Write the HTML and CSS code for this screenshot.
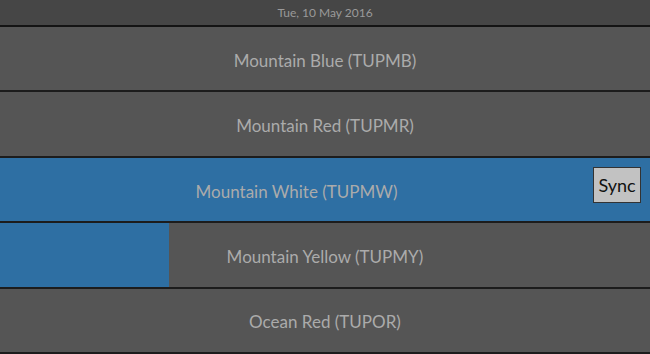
FILE: index.html
```html
<!DOCTYPE html>
<html>
<head>
<meta charset="utf-8">
<link rel="stylesheet" href="styles.css">
</head>
<body>
<div class="app">
  <header class="date">Tue, 10 May 2016</header>
  <div class="row"><span class="label">Mountain Blue (TUPMB)</span></div>
  <div class="row"><span class="label">Mountain Red (TUPMR)</span></div>
  <div class="row active"><span class="label">Mountain White (TUPMW)</span><button class="sync">Sync</button></div>
  <div class="row"><div class="progress" style="width:26%"></div><span class="label">Mountain Yellow (TUPMY)</span></div>
  <div class="row"><span class="label">Ocean Red (TUPOR)</span></div>
</div>
</body>
</html>
```
FILE: styles.css
```css
html, body {
  margin: 0;
  padding: 0;
  height: 100%;
  background: #555555;
  font-family: Lato, "Open Sans", sans-serif;
}
.app {
  height: 100vh;
  display: flex;
  flex-direction: column;
}
.date {
  height: 25px;
  flex: none;
  background: #464646;
  color: #9a9a9a;
  font-size: 12px;
  display: flex;
  align-items: center;
  justify-content: center;
  border-bottom: 2px solid #141414;
}
.row {
  flex: 1;
  position: relative;
  display: flex;
  align-items: center;
  background: #555555;
  border-bottom: 2px solid #1c1c1c;
  color: #ababab;
  font-size: 17px;
}
.row.active {
  background: #2e6fa3;
}
.progress {
  position: absolute;
  left: 0;
  top: 0;
  bottom: 0;
  background: #2e6fa3;
}
.label {
  position: relative;
  flex: 1;
  text-align: center;
  padding-top: 3px;
}
.sync {
  flex: none;
  align-self: flex-start;
  margin: 9px 9px 0 0;
  width: 48px;
  height: 36px;
  background: #c2c2c2;
  border: 1px solid #333;
  color: #111;
  font-family: Lato, sans-serif;
  font-size: 18px;
  padding: 0;
}
```
